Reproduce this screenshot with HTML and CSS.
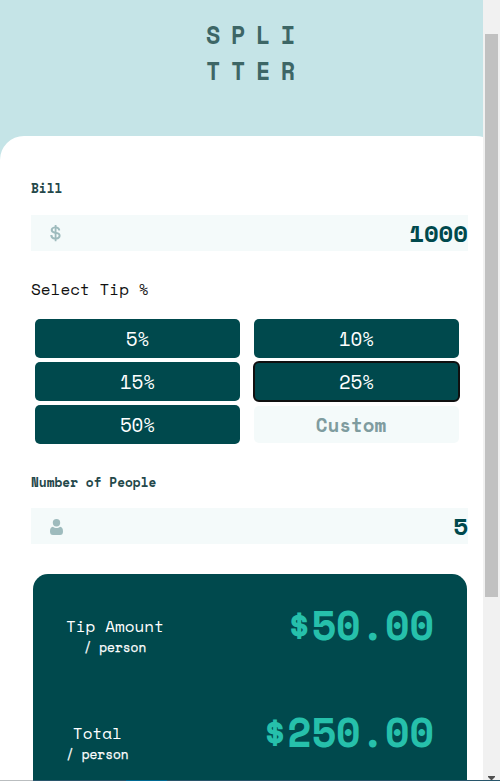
FILE: index.html
```
<!DOCTYPE html>
<html lang="en">
<head>
<meta charset="utf-8">
<title>Splitter</title>
<link rel="stylesheet" href="styles.css">
</head>
<body>
<div class="window">
  <div class="viewport">
    <header class="logo"><span>SPLI</span><span>TTER</span></header>
    <main class="card">
      <label class="label" for="bill">Bill</label>
      <div class="field">
        <svg class="icon" width="11" height="17" viewBox="0 0 11 17"><path fill="#9ebbbd" d="M6.2 16.2c.2 0 .3-.1.3-.3v-1.4c2.500-.3 4.100-1.700 4.100-3.800 0-2.100-1.400-3.100-4.100-3.700V3.400c.9.2 1.500.8 1.600 1.700 0 .2.100.3.300.3h1.500c.200 0 .300-.1.300-.3C10 3 8.600 1.700 6.500 1.400V.3c0-.2-.1-.3-.3-.3H5c-.200 0-.3.100-.3.300v1.100C2.200 1.700.700 3.100.700 5.100c0 2 1.300 3 4 3.600v3.800c-1.300-.2-2.100-.9-2.200-2.100 0-.2-.1-.3-.3-.3H.600c-.2 0-.300.1-.300.3.1 2.400 1.700 3.800 4.400 4.100v1.400c0 .2.100.3.300.3zM4.700 6.600c-1.300-.3-1.900-.7-1.900-1.600s.7-1.500 1.900-1.700zM6.500 12.500V9.100c1.400.3 2.100.7 2.100 1.700 0 .9-.8 1.500-2.100 1.700z"/></svg>
        <input class="value" id="bill" value="1000">
      </div>
      <p class="tip-title">Select Tip %</p>
      <div class="tips">
        <button class="tip">5%</button>
        <button class="tip">10%</button>
        <button class="tip">15%</button>
        <button class="tip active">25%</button>
        <button class="tip">50%</button>
        <input class="custom" placeholder="Custom" aria-label="Custom tip">
      </div>
      <label class="label people-label" for="people">Number of People</label>
      <div class="field">
        <svg class="icon person" width="13" height="16" viewBox="0 0 13 16"><g fill="#9ebbbd"><circle cx="6.500" cy="3.700" r="3.700"/><path d="M2.900 7.700C4.800 9.500 8.200 9.500 10.100 7.700C12.200 7.900 13 9.600 13 12.500C13 15 12 16 10 16H3C1 16 0 15 0 12.500C0 9.600.8 7.900 2.900 7.700Z"/></g></svg>
        <input class="value" id="people" value="5">
      </div>
      <section class="results">
        <div class="result">
          <div class="caption"><span>Tip Amount</span><small>/ person</small></div>
          <strong class="amount">$50.00</strong>
        </div>
        <div class="result">
          <div class="caption"><span>Total</span><small>/ person</small></div>
          <strong class="amount">$250.00</strong>
        </div>
      </section>
    </main>
  </div>
  <div class="scrollbar">
    <div class="thumb"></div>
    <svg class="arrow" width="7" height="4" viewBox="0 0 7 4"><path d="M0 0H7V1L4 4H3L0 1Z" fill="#505050"/></svg>
  </div>
  <div class="edge"></div>
</div>
</body>
</html>
```
FILE: styles.css
```
* { box-sizing: border-box; }

body {
  margin: 0;
  overflow: hidden;
  font-family: "Space Mono", "DejaVu Sans Mono", "Liberation Mono", monospace;
}

.window {
  position: relative;
  display: flex;
  width: 500px;
  height: 781px;
  overflow: hidden;
}

.viewport {
  width: 483px;
  overflow: hidden;
  background: #c5e4e7;
}

.logo {
  display: flex;
  flex-direction: column;
  width: 500px;
  height: 136px;
  padding: 16px 0 0 206px;
  color: #3d6666;
  font-size: 25.5px;
  font-weight: bold;
  line-height: 36px;
  letter-spacing: 11.5px;
}

.logo span {
  transform: scaleX(0.92);
  transform-origin: 0 50%;
}

.card {
  width: 500px;
  height: 800px;
  padding: 40px 32px 0 31px;
  background: #fff;
  border-radius: 24px 24px 0 0;
}

.label {
  display: block;
  height: 39px;
  padding-top: 3px;
  color: #24484a;
  font-size: 12.8px;
  font-weight: bold;
  line-height: 20px;
}

.people-label { padding-top: 4px; }

.field {
  display: flex;
  align-items: center;
  justify-content: space-between;
  height: 36px;
  padding-left: 19px;
  background: #f4fafa;
}

.icon { flex: none; }

.person { margin-top: 2px; }

.value {
  width: 300px;
  height: 36px;
  padding: 0;
  border: 0;
  outline: 0;
  background: transparent;
  color: #00494d;
  font: bold 24px/34px "Space Mono", "DejaVu Sans Mono", monospace;
  text-align: right;
}

.tip-title {
  height: 68px;
  margin: 0;
  padding-top: 26px;
  color: #111;
  font-size: 16px;
  line-height: 24px;
}

.tips {
  display: grid;
  grid-template-columns: 205px 205px;
  grid-auto-rows: 39px;
  gap: 4px 14px;
  margin: 0 0 25px 4px;
}

.tip,
.custom {
  width: 205px;
  height: 39px;
  margin: 0;
  padding: 1px 0 0;
  border: 0;
  border-radius: 5px;
  background: #00494d;
  color: #fff;
  font: 19.2px/38px "Space Mono", "DejaVu Sans Mono", monospace;
  text-align: center;
}

.tip.active {
  outline: 2px solid #101010;
  outline-offset: -1px;
}

.custom {
  height: 37px;
  margin-top: 1px;
  padding-right: 11px;
  background: #f4fafa;
  font-weight: bold;
}

.custom::placeholder {
  color: #7f9c9f;
  opacity: 1;
}

.results {
  width: 434px;
  height: 300px;
  margin: 30px 0 0 2px;
  padding: 24px 33px 0;
  border-radius: 15px;
  background: #00494d;
}

.result {
  display: flex;
  justify-content: space-between;
  height: 107px;
}

.caption {
  display: flex;
  flex-direction: column;
  align-items: center;
  padding-top: 16px;
  color: #fff;
  font-size: 16px;
  line-height: 24px;
}

.caption small {
  font-size: 12.8px;
  line-height: 20px;
  -webkit-text-stroke: 0.25px #fff;
}

.amount {
  color: #26c0ab;
  font-size: 40px;
  line-height: 54px;
}

.scrollbar {
  position: relative;
  width: 17px;
  padding: 34px 2px 0;
  background: #f1f1f1;
}

.thumb {
  height: 563px;
  background: #c1c1c1;
}

.arrow {
  position: absolute;
  left: 5px;
  bottom: 1px;
}

.edge {
  position: absolute;
  right: 0;
  bottom: 0;
  left: 0;
  height: 1px;
  background: linear-gradient(90deg, #b9bdbf 33px, #28566b 33px 126px, #006a92 126px 167px, #28566b 167px);
}
```
